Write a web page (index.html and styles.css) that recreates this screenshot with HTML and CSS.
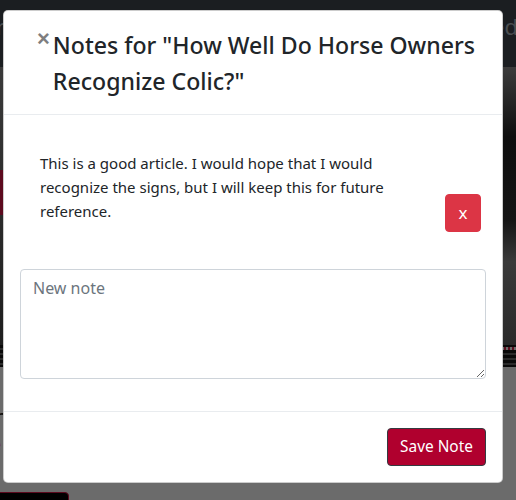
FILE: index.html
```html
<!DOCTYPE html>
<html lang="en">
<head>
<meta charset="utf-8">
<title>Notes</title>
<link rel="stylesheet" href="styles.css">
</head>
<body>
<div class="page">
  <nav class="navbar">
    <span class="nav-left">r</span>
    <span class="nav-right">ed</span>
  </nav>
  <div class="hero">
    <div class="hero-left"><div class="red-block"></div></div>
    <div class="hero-right"></div>
  </div>
  <div class="hero-strip"><div class="dots"></div></div>
  <div class="below">
    <div class="below-h">n</div>
    <div class="below-link">e</div>
  </div>
  <div class="bottom-btn"></div>
</div>

<div class="modal">
  <div class="modal-header">
    <button class="close" type="button">&times;</button>
    <h4 class="modal-title">Notes for "How Well Do Horse Owners Recognize Colic?"</h4>
  </div>
  <div class="modal-body">
    <div class="note-row">
      <p class="note-text">This is a good article. I would hope that I would recognize the signs, but I will keep this for future reference.</p>
      <button class="btn btn-danger" type="button">x</button>
    </div>
    <div class="form-group">
      <textarea class="form-control" rows="4" placeholder="New note"></textarea>
    </div>
  </div>
  <div class="modal-footer">
    <button class="btn btn-save" type="button">Save Note</button>
  </div>
</div>
</body>
</html>
```
FILE: styles.css
```css
* { box-sizing: border-box; }
html, body { margin: 0; padding: 0; }
body {
  width: 516px;
  height: 500px;
  overflow: hidden;
  background: #6b6b6b;
  font-family: "Noto Sans", "Open Sans", sans-serif;
  color: #212529;
  position: relative;
}
.page { width: 516px; height: 500px; }
.navbar {
  height: 67px;
  background: #1b1e21;
  display: flex;
  justify-content: space-between;
  align-items: center;
  padding: 0 0 16px 0;
  color: #4a4e52;
  font-size: 22px;
}
.nav-left { margin-left: -4px; }
.nav-right { margin-right: -2px; }
.hero {
  height: 278px;
  display: flex;
  justify-content: space-between;
}
.hero-left {
  width: 30px;
  background: linear-gradient(180deg, #3a3a3a 0%, #2e2e2e 40%, #262626 70%, #1e1e1e 100%);
  padding-top: 103px;
}
.red-block { width: 4px; height: 45px; background: #5c0a1e; }
.hero-right {
  width: 30px;
  background: linear-gradient(180deg, #3c3c3c 0%, #0e0e0e 25%, #151515 55%, #3a3a3a 70%, #2a2a2a 100%);
}
.hero-strip {
  height: 22px;
  background: repeating-linear-gradient(180deg, #0a0a0a 0 3px, #2b2b2b 3px 5px);
  position: relative;
}
.dots {
  position: absolute;
  right: 0;
  top: 2px;
  width: 20px;
  height: 3px;
  background: repeating-linear-gradient(90deg, #5a1020 0 2px, #6b6b6b 2px 4px);
}
.below { padding-top: 40px; }
.below-h { font-size: 24px; color: #111; margin-left: -6px; line-height: 20px; }
.below-link { font-size: 16px; color: #6a0e20; margin-left: -8px; margin-top: 6px; }
.bottom-btn {
  position: absolute;
  left: -4px;
  top: 492px;
  width: 73px;
  height: 20px;
  background: #000;
  border: 1px solid #5c0a1e;
  border-radius: 4px;
}

.modal {
  position: absolute;
  left: 3px;
  top: 10px;
  width: 500px;
  background: #fff;
  border: 1px solid rgba(0,0,0,.2);
  border-radius: 5px;
  display: flex;
  flex-direction: column;
}
.modal-header {
  display: flex;
  align-items: flex-start;
  padding: 16px 8px 15px 33px;
  border-bottom: 1px solid #e9ecef;
}
.close {
  background: none;
  border: 0;
  padding: 0;
  margin: 0 3px 0 0;
  font-size: 22px;
  line-height: 24px;
  font-weight: 700;
  color: #000;
  opacity: .5;
  font-family: "Liberation Sans", sans-serif;
  cursor: pointer;
}
.modal-title {
  margin: 0;
  font-size: 23.1px;
  font-weight: 500;
  line-height: 36px;
  color: #212529;
}
.modal-body { padding: 16px; }
.note-row {
  display: flex;
  align-items: flex-start;
  padding: 20px 5px 20px 20px;
  margin-bottom: 17px;
}
.note-text {
  margin: 0;
  width: 380px;
  font-size: 15px;
  line-height: 24px;
}
.btn {
  font-family: inherit;
  font-size: 16px;
  line-height: 24px;
  padding: 6px 12px;
  border-radius: 4px;
  border: 1px solid transparent;
  color: #fff;
  cursor: pointer;
}
.btn-danger {
  margin-left: auto;
  margin-top: 43px;
  background: #dc3545;
  border-color: #dc3545;
  width: 36px;
  height: 38px;
  padding: 6px 0;
  font-size: 17px;
}
.form-group { margin-bottom: 16px; }
.form-control {
  display: block;
  width: 100%;
  height: 110px;
  padding: 6px 12px;
  font-family: inherit;
  font-size: 16px;
  line-height: 24px;
  color: #495057;
  border: 1px solid #ced4da;
  border-radius: 4px;
  resize: vertical;
}
.form-control::placeholder { color: #6c757d; opacity: 1; }
.modal-footer {
  display: flex;
  justify-content: flex-end;
  padding: 16px;
  border-top: 1px solid #e9ecef;
}
.btn-save {
  background: #b0002e;
  border-color: #343a40;
  height: 38px;
  width: 99px;
  padding: 6px 0;
  font-size: 15.4px;
}
```
